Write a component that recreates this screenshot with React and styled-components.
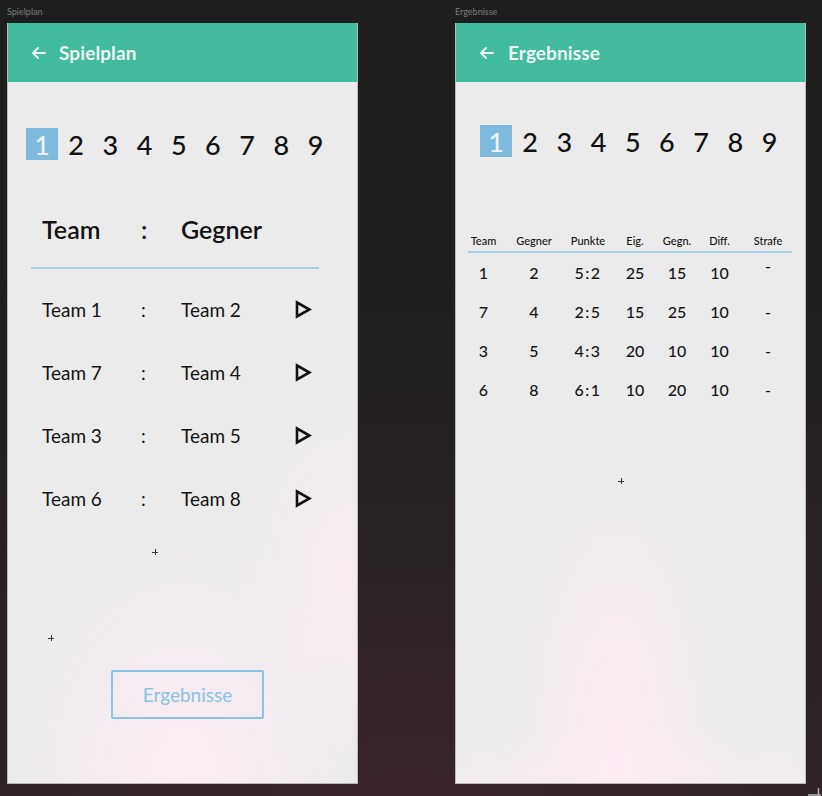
import React from "react";
import styled, { createGlobalStyle } from "styled-components";

const Global = createGlobalStyle`
  html, body { margin: 0; padding: 0; }
  body {
    width: 822px;
    height: 796px;
    overflow: hidden;
    font-family: "Lato", "Noto Sans", sans-serif;
    background:
      radial-gradient(ellipse 420px 260px at 410px 820px, rgba(60, 36, 44, 0.9), rgba(60, 36, 44, 0) 100%),
      linear-gradient(to bottom, #1e1e1e 0%, #1f1e1e 35%, #292225 70%, #2e2227 100%);
  }
`;

const Canvas = styled.div`
  position: relative;
  display: flex;
  gap: 97px;
  padding-left: 7px;
  width: 822px;
  height: 796px;
  box-sizing: border-box;
`;

const Board = styled.div`
  display: flex;
  flex-direction: column;
  width: 351px;
`;

const BoardLabel = styled.div`
  height: 23px;
  line-height: 24px;
  font-size: 9px;
  color: #7d7d7d;
`;

const Frame = styled.div`
  position: relative;
  display: flex;
  flex-direction: column;
  height: 761px;
  box-sizing: border-box;
  border: 1px solid #b9b9b9;
  border-top: none;
  background: ${(p) => p.$bg};
  overflow: hidden;
`;

const Header = styled.div`
  display: flex;
  align-items: center;
  gap: ${(p) => p.$gap}px;
  height: 59px;
  flex-shrink: 0;
  padding-left: 23px;
  background: #43bb9e;
  color: #eef4f1;
`;

const Title = styled.div`
  font-size: 19px;
  font-weight: 700;
  letter-spacing: 0.1px;
`;

const Content = styled.div`
  display: flex;
  flex-direction: column;
  padding: ${(p) => p.$pad};
`;

const NumberRow = styled.div`
  display: flex;
  gap: 2.2px;
`;

const NumCell = styled.div`
  width: 32px;
  height: 32px;
  display: flex;
  align-items: center;
  justify-content: center;
  font-size: 27px;
  font-weight: 500;
  color: ${(p) => (p.$active ? "#eaf2f7" : "#111")};
  background: ${(p) => (p.$active ? "#7dbadd" : "transparent")};
`;

const MatchGrid = styled.div`
  display: grid;
  grid-template-columns: 99px 40px 113px 20px;
  align-items: center;
  padding-left: 34px;
  height: ${(p) => p.$h}px;
  font-size: ${(p) => p.$size}px;
  font-weight: ${(p) => p.$weight};
  color: #141414;
`;

const Divider = styled.div`
  height: 1.5px;
  width: ${(p) => p.$w}px;
  margin-left: ${(p) => p.$ml}px;
  margin-top: ${(p) => p.$mt}px;
  margin-bottom: ${(p) => p.$mb}px;
  background: #a6cfe6;
`;

const ActionButton = styled.button`
  align-self: flex-start;
  width: 153px;
  height: 49px;
  margin-left: 103px;
  margin-top: 140px;
  border: 2px solid #8cc3e3;
  border-radius: 2px;
  background: transparent;
  color: #8cc3e3;
  font-family: "Lato", "Noto Sans", sans-serif;
  font-size: 19px;
  font-weight: 400;
  padding: 0;
`;

const Table = styled.div`
  display: grid;
  grid-template-columns: 31px 70px 38px 56px 28px 57px 40px;
  align-items: center;
`;

const Cell = styled.div`
  display: flex;
  justify-content: center;
  height: ${(p) => p.$h}px;
  align-items: center;
  font-size: ${(p) => p.$size}px;
  font-weight: 500;
  color: #151515;
  white-space: nowrap;
  position: relative;
  top: ${(p) => (p.$raised ? -7 : 0)}px;
  letter-spacing: ${(p) => (p.$spaced ? 1.5 : 0)}px;
`;

const Plus = styled.span`
  position: absolute;
  left: ${(p) => p.$x}px;
  top: ${(p) => p.$y}px;
  width: 6px;
  height: 6px;
  &::before, &::after {
    content: "";
    position: absolute;
    background: #3a3a3a;
  }
  &::before { left: 0; top: 2.5px; width: 6px; height: 1px; }
  &::after { left: 2.5px; top: 0; width: 1px; height: 6px; }
`;

const Corner = styled.svg`
  position: absolute;
  right: 0;
  bottom: 0;
`;

const Arrow = () => (
  <svg width="15" height="14" viewBox="0 0 15 14" fill="none">
    <path d="M14 7H2M7 2L2 7l5 5" stroke="#eef4f1" strokeWidth="1.9" strokeLinecap="round" strokeLinejoin="round" />
  </svg>
);

const Play = () => (
  <svg width="18" height="19" viewBox="0 0 18 19" fill="none">
    <path d="M3 2.5L15.5 9.5L3 16.5Z" stroke="#111" strokeWidth="2.6" strokeLinejoin="miter" />
  </svg>
);

const leftBg = `
  radial-gradient(ellipse 180px 260px at 175px 760px, rgba(252, 236, 244, 1), rgba(252, 236, 244, 0) 100%),
  radial-gradient(ellipse 120px 200px at 345px 560px, rgba(250, 236, 242, 0.9), rgba(250, 236, 242, 0) 100%),
  #ebebeb`;
const rightBg = `
  radial-gradient(ellipse 110px 280px at 160px 720px, rgba(252, 234, 243, 1), rgba(252, 234, 243, 0) 100%),
  radial-gradient(ellipse 360px 70px at 175px 770px, rgba(250, 236, 242, 0.8), rgba(250, 236, 242, 0) 100%),
  #ebebeb`;

const matches = [
  ["Team 1", "Team 2"],
  ["Team 7", "Team 4"],
  ["Team 3", "Team 5"],
  ["Team 6", "Team 8"],
];

const results = [
  ["1", "2", "5:2", "25", "15", "10", "-"],
  ["7", "4", "2:5", "15", "25", "10", "-"],
  ["3", "5", "4:3", "20", "10", "10", "-"],
  ["6", "8", "6:1", "10", "20", "10", "-"],
];

const headers = ["Team", "Gegner", "Punkte", "Eig.", "Gegn.", "Diff.", "Strafe"];
const nums = [1, 2, 3, 4, 5, 6, 7, 8, 9];

export default function App() {
  return (
    <>
      <Global />
      <Canvas>
        <Board>
          <BoardLabel>Spielplan</BoardLabel>
          <Frame $bg={leftBg}>
            <Header $gap={13}>
              <Arrow />
              <Title>Spielplan</Title>
            </Header>
            <Content $pad="46px 0 0 18px">
              <NumberRow>
                {nums.map((n) => (
                  <NumCell key={n} $active={n === 1}>{n}</NumCell>
                ))}
              </NumberRow>
            </Content>
            <Content $pad="54px 0 0 0">
              <MatchGrid $h={30} $size={25} $weight={600}>
                <span>Team</span>
                <span>:</span>
                <span>Gegner</span>
                <span />
              </MatchGrid>
              <Divider $w={288} $ml={23} $mt={23} $mb={9.5} />
              {matches.map(([a, b]) => (
                <MatchGrid key={a} $h={63} $size={19} $weight={400}>
                  <span>{a}</span>
                  <span>:</span>
                  <span>{b}</span>
                  <Play />
                </MatchGrid>
              ))}
              <ActionButton>Ergebnisse</ActionButton>
            </Content>
            <Plus $x={144} $y={526} />
            <Plus $x={40} $y={612} />
          </Frame>
        </Board>
        <Board>
          <BoardLabel>Ergebnisse</BoardLabel>
          <Frame $bg={rightBg}>
            <Header $gap={14}>
              <Arrow />
              <Title>Ergebnisse</Title>
            </Header>
            <Content $pad="43px 0 0 24px">
              <NumberRow>
                {nums.map((n) => (
                  <NumCell key={n} $active={n === 1}>{n}</NumCell>
                ))}
              </NumberRow>
            </Content>
            <Content $pad="75px 0 0 12px">
              <Table>
                {headers.map((h) => (
                  <Cell key={h} $h={16} $size={11}>{h}</Cell>
                ))}
              </Table>
              <Divider $w={324} $ml={0} $mt={3} $mb={0} />
              <Table>
                {results.map((row, ri) =>
                  row.map((v, ci) => (
                    <Cell
                      key={ri + "-" + ci}
                      $h={39}
                      $size={16}
                      $spaced={ci === 2}
                      $raised={ri === 0 && ci === 6}
                    >
                      {v}
                    </Cell>
                  ))
                )}
              </Table>
            </Content>
            <Plus $x={162} $y={455} />
          </Frame>
        </Board>
        <Corner width="16" height="9" viewBox="0 0 16 9">
          <path d="M2 8H15M12.5 1V8" stroke="#b5b5b5" strokeWidth="1.5" fill="none" />
        </Corner>
      </Canvas>
    </>
  );
}
